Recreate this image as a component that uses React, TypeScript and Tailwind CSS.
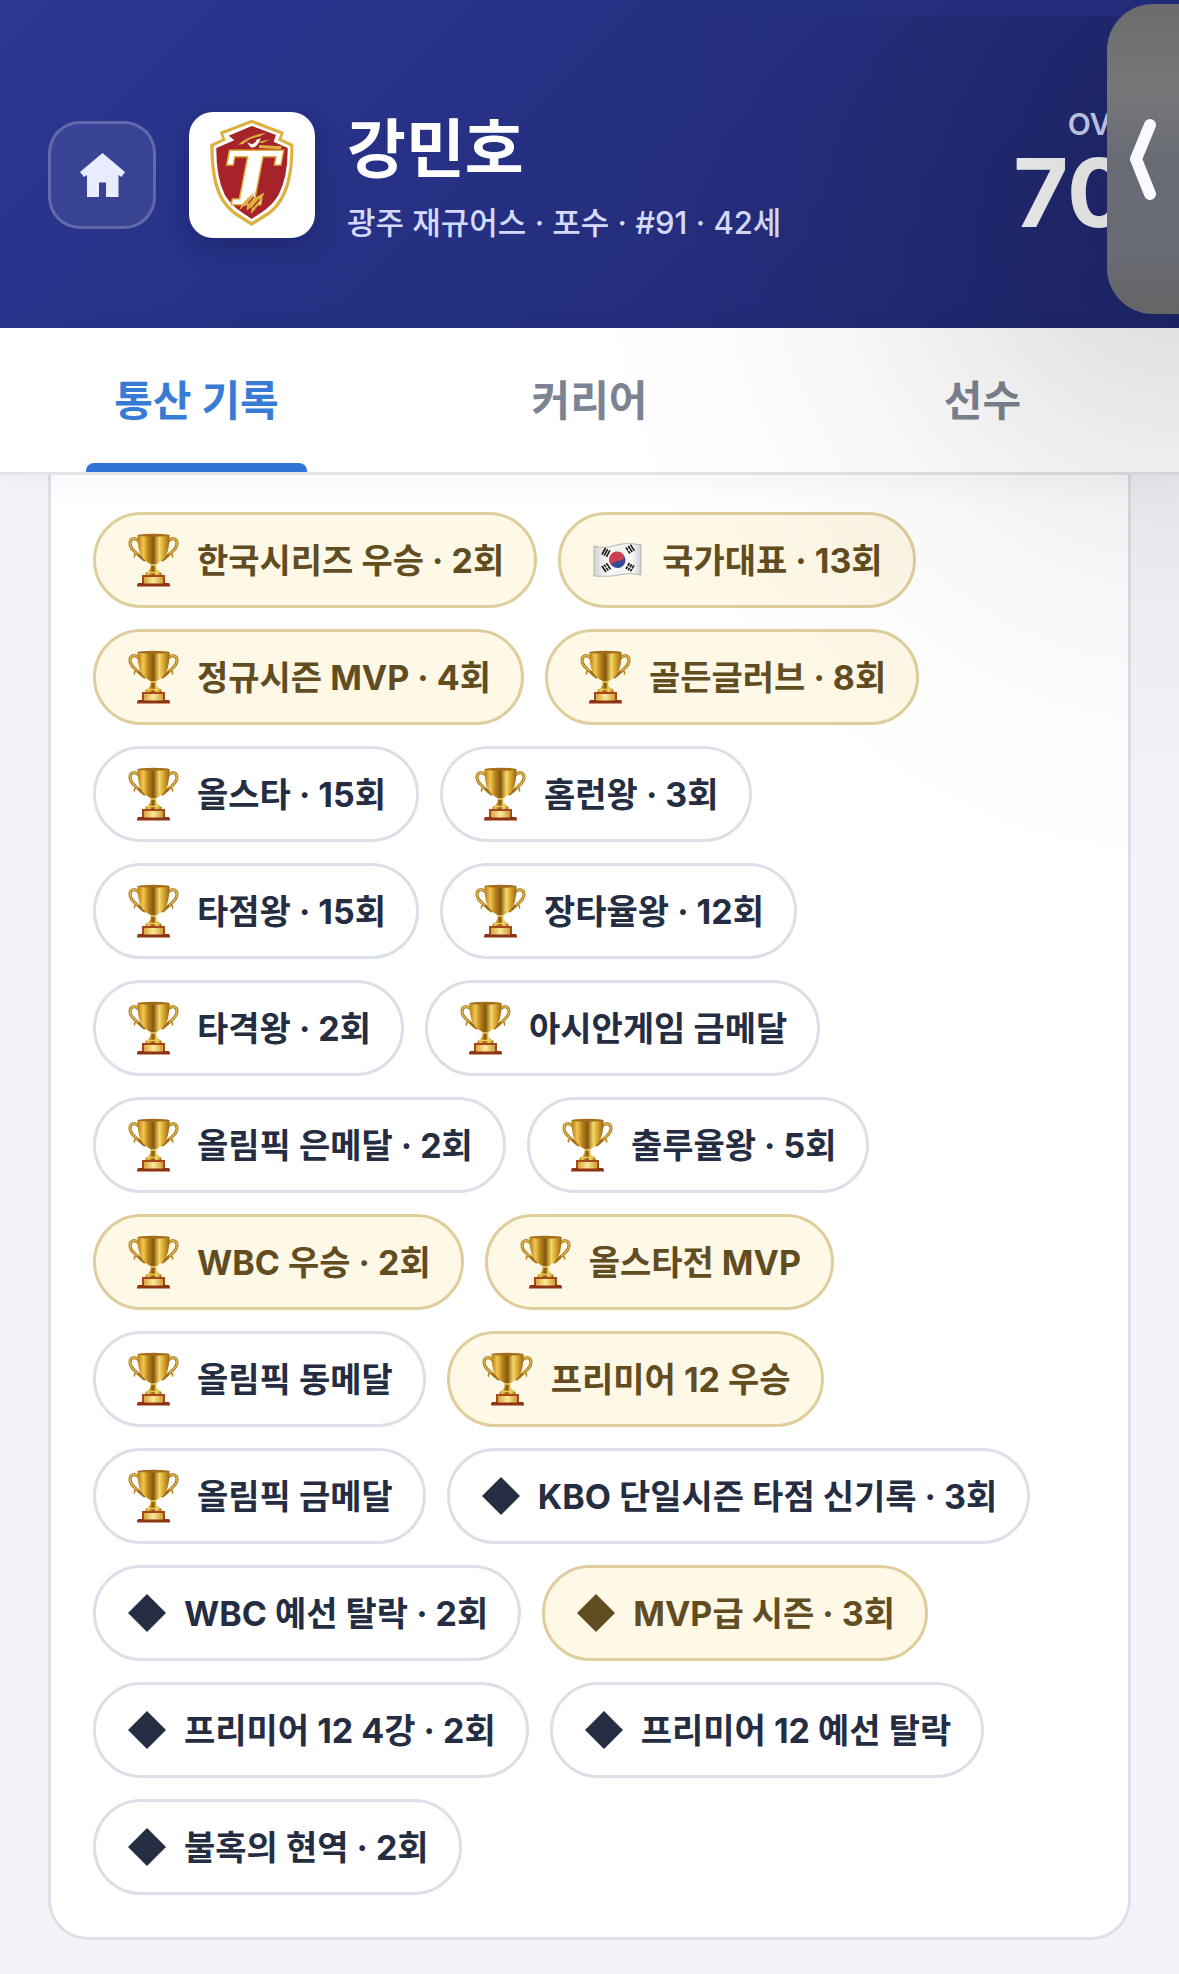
import clsx from 'clsx';
import React, { useState } from 'react';

type BadgeIcon = 'trophy' | 'flag' | 'diamond';

interface Badge {
  label: string;
  icon: BadgeIcon;
  gold?: boolean;
}

const TABS = ['통산 기록', '커리어', '선수'];

const BADGES: Badge[] = [
  { label: '한국시리즈 우승 · 2회', icon: 'trophy', gold: true },
  { label: '국가대표 · 13회', icon: 'flag', gold: true },
  { label: '정규시즌 MVP · 4회', icon: 'trophy', gold: true },
  { label: '골든글러브 · 8회', icon: 'trophy', gold: true },
  { label: '올스타 · 15회', icon: 'trophy' },
  { label: '홈런왕 · 3회', icon: 'trophy' },
  { label: '타점왕 · 15회', icon: 'trophy' },
  { label: '장타율왕 · 12회', icon: 'trophy' },
  { label: '타격왕 · 2회', icon: 'trophy' },
  { label: '아시안게임 금메달', icon: 'trophy' },
  { label: '올림픽 은메달 · 2회', icon: 'trophy' },
  { label: '출루율왕 · 5회', icon: 'trophy' },
  { label: 'WBC 우승 · 2회', icon: 'trophy', gold: true },
  { label: '올스타전 MVP', icon: 'trophy', gold: true },
  { label: '올림픽 동메달', icon: 'trophy' },
  { label: '프리미어 12 우승', icon: 'trophy', gold: true },
  { label: '올림픽 금메달', icon: 'trophy' },
  { label: 'KBO 단일시즌 타점 신기록 · 3회', icon: 'diamond' },
  { label: 'WBC 예선 탈락 · 2회', icon: 'diamond' },
  { label: 'MVP급 시즌 · 3회', icon: 'diamond', gold: true },
  { label: '프리미어 12 4강 · 2회', icon: 'diamond' },
  { label: '프리미어 12 예선 탈락', icon: 'diamond' },
  { label: '불혹의 현역 · 2회', icon: 'diamond' },
];

export default function App(): React.ReactElement {
  const [tab, setTab] = useState(0);

  return (
    <div className="relative min-h-screen overflow-hidden bg-[#f2f4f9] font-['Inter','Noto_Sans_CJK_KR',sans-serif]">
      <PlayerHeader />

      <div role="tablist" className="relative flex h-[147px] border-b-[3px] border-[#e1e4eb] bg-white shadow-[0_6px_36px_rgba(20,30,60,0.04)]">
        {TABS.map((name, i) => (
          <button
            key={name}
            type="button"
            role="tab"
            aria-selected={i === tab}
            onClick={() => setTab(i)}
            className={clsx(
              'relative flex-1 text-[42px]',
              i === tab ? 'font-bold text-[#377bd5]' : 'font-semibold text-[#7c8493]',
            )}
          >
            {name}
            {i === tab && (
              <span className="absolute inset-x-[22%] bottom-0 h-[9px] rounded-t-lg bg-[#3073d6]" />
            )}
          </button>
        ))}
      </div>

      <main className="px-12 pb-[34px]">
        <ul className="flex flex-wrap gap-[21px] rounded-b-[40px] border-[3px] border-t-0 border-[#dee0e8] bg-white px-[42px] pt-[37px] pb-[42px]">
          {BADGES.map((b) => <BadgePill key={b.label} badge={b} />)}
        </ul>
      </main>

      {/* shade cast by the edge handle */}
      <div className="pointer-events-none absolute top-4 right-0 h-[900px] w-[620px] bg-[radial-gradient(ellipse_600px_700px_at_100%_18%,rgba(0,0,0,0.16),rgba(0,0,0,0.12)_20%,rgba(0,0,0,0.07)_40%,rgba(0,0,0,0.03)_60%,rgba(0,0,0,0.01)_80%,transparent)]" />
      <EdgeHandle />
    </div>
  );
}

function PlayerHeader(): React.ReactElement {
  return (
    <header className="flex h-[328px] items-center bg-linear-135 from-[#2b3793] to-[#1f286f] px-12 pt-[22px]">
      <button
        type="button"
        aria-label="홈"
        className="flex size-[108px] items-center justify-center rounded-[32px] border-[3px] border-white/20 bg-white/8"
      >
        <svg viewBox="0 0 46 46" className="size-[46px] fill-[#e9ebff]" aria-hidden="true">
          <path d="M23.500 1 46 20 42.500 25 39.500 23V45H27V30.500H20V45H8V23L5 25 1 20Z" />
        </svg>
      </button>

      <div className="ml-[33px] size-[126px] overflow-hidden rounded-[24px] bg-white shadow-[0_8px_24px_rgba(10,15,60,0.3)]">
        <TeamLogo />
      </div>

      <div className="ml-8 min-w-0 flex-1 pt-[6px]">
        <h1 className="text-[64px] leading-[76px] font-bold text-white">강민호</h1>
        <p className="mt-[14px] text-[31px] leading-[44px] font-medium text-[#d5dafb]">
          광주 재규어스 · 포수 · #91 · 42세
        </p>
      </div>

      <div className="text-right">
        <div className="text-[30px] leading-9 font-semibold text-[#d5dafb]">OVR</div>
        <div className="text-[95px] leading-[102px] font-bold text-white">70</div>
      </div>
    </header>
  );
}

function BadgePill({ badge }: { badge: Badge }): React.ReactElement {
  return (
    <li
      className={clsx(
        'flex h-24 items-center gap-[18px] rounded-full border-[3px] pr-[30px] pl-8 text-[34px] font-bold whitespace-nowrap',
        badge.gold
          ? 'border-[#dfce9c] bg-[#fef8e7] text-[#614d1f]'
          : 'border-[#dbdfe7] bg-white text-[#252d42]',
      )}
    >
      {badge.icon === 'trophy' && <TrophyIcon />}
      {badge.icon === 'flag' && <FlagIcon />}
      {badge.icon === 'diamond' && <DiamondIcon />}
      <span>{badge.label}</span>
    </li>
  );
}

/** Handle of the side drawer, half hidden at the right edge of the screen. */
function EdgeHandle(): React.ReactElement {
  return (
    <button
      type="button"
      aria-label="패널 열기"
      className="absolute top-1 right-0 flex h-[310px] w-[72px] items-center justify-center rounded-l-[46px] bg-[linear-gradient(#6b6c6b,#767779_28%,#686b74_52%,#686b73_80%,#646566)]"
    >
      <svg viewBox="0 0 26 82" className="h-[82px] w-[26px]" fill="none" aria-hidden="true">
        <path d="M20 7 6 41 20 76" stroke="#f8faff" strokeWidth="12" strokeLinecap="round" strokeLinejoin="round" />
      </svg>
    </button>
  );
}

function DiamondIcon(): React.ReactElement {
  return (
    <svg viewBox="0 0 38 38" className="size-[38px] shrink-0 fill-current" aria-hidden="true">
      <path d="M19 0 38 19 19 38 0 19Z" />
    </svg>
  );
}

function TrophyIcon(): React.ReactElement {
  return (
    <svg viewBox="0 0 51 54" className="h-[54px] w-[51px] shrink-0" aria-hidden="true">
      <defs>
        <linearGradient id="cup" x1="0" x2="1">
          <stop offset="0" stopColor="#b57a12" />
          <stop offset=".18" stopColor="#f0c850" />
          <stop offset=".34" stopColor="#b8821a" />
          <stop offset=".5" stopColor="#85570f" />
          <stop offset=".68" stopColor="#f4d968" />
          <stop offset=".85" stopColor="#cf9a28" />
          <stop offset="1" stopColor="#99650f" />
        </linearGradient>
        <linearGradient id="plate" x1="0" x2="1">
          <stop offset="0" stopColor="#d9a441" />
          <stop offset=".5" stopColor="#fbe998" />
          <stop offset="1" stopColor="#d09a38" />
        </linearGradient>
      </defs>
      <g fill="none" strokeLinecap="round">
        <path d="M11 8.500C8 4 2 5 2 10.500c0 5 4 7.500 7.500 10.500 2 2 4 4 7 6M40 8.500c3-4.500 9-3.500 9 2 0 5-4 7.500-7.500 10.500-2 2-4 4-7 6" stroke="#a06c16" strokeWidth="3" />
        <path d="M11 8.500C8 4 2 5 2 10.500c0 5 4 7.500 7.500 10.500M40 8.500c3-4.500 9-3.500 9 2 0 5-4 7.500-7.500 10.500" stroke="#e5bf52" strokeWidth="1.300" />
        <path d="M8 21q-2 .5-1.500 3M43 21q2 .5 1.500 3" stroke="#b9831f" strokeWidth="1.500" />
      </g>
      <path d="M23 28h5l.5 7q1 3 5 5v3h-16v-3q4-2 5-5Z" fill="url(#cup)" />
      <path d="M9.500 2h32q0 13-3 19.500-3.500 6.500-10 9.500h-6q-6.500-3-10-9.500-3-6.500-3-19.500Z" fill="url(#cup)" />
      <ellipse cx="25.500" cy="2.200" rx="16" ry="1.500" fill="#a26c1c" />
      <path d="M22.500 32h6M19.500 39.500h12" stroke="#f0ca5a" strokeWidth="1.500" />
      <path d="M14 42h23v8.500H14Z" fill="#a5491d" />
      <path d="M10.500 50h30q1.500 0 1.500 3.500H9Q9 50 10.500 50Z" fill="#8f3412" />
      <path d="M16 44h19v6.500H16Z" fill="url(#plate)" />
    </svg>
  );
}

function FlagIcon(): React.ReactElement {
  return (
    <svg viewBox="0 0 51 36" className="h-9 w-[51px] shrink-0" aria-hidden="true">
      <defs>
        <linearGradient id="cloth" x1="0" x2="1">
          <stop offset="0" stopColor="#d3d3d5" />
          <stop offset=".28" stopColor="#fafafa" />
          <stop offset=".6" stopColor="#f1f1f2" />
          <stop offset=".78" stopColor="#ffffff" />
          <stop offset="1" stopColor="#cfcfd1" />
        </linearGradient>
      </defs>
      <path d="M1 4Q11 7 22 3.500T48 3V33Q38 30 28 32.500T1 34Z" fill="url(#cloth)" stroke="#b7b5b2" strokeWidth="1" />
      <g transform="rotate(-4 24.500 18)">
        <circle cx="24.500" cy="18" r="8" fill="#344a93" />
        <path d="M17.500 22A8 8 0 1 1 31.500 14.500Q31 18 28 18.500T23 19.500T17.500 22Z" fill="#ce3f4d" />
      </g>
      <g stroke="#1f1f22" strokeWidth="1.700" fill="none">
        <path d="M9 12.500 12.500 6M11.200 13.700 14.700 7.200M13.400 14.900 16.900 8.400" />
        <path d="M33 5.500 37 11.500M35.200 4 39.200 10M37.400 2.600 41.400 8.600" />
        <path d="M9 24 13 30M11.200 22.600 15.200 28.600M13.400 21.200 17.400 27.200" />
        <path d="M33 27 36.500 21M35.200 28.200 38.700 22.200M37.400 29.400 40.900 23.400" />
      </g>
      <g stroke="#f2f2f2" strokeWidth="1" fill="none">
        <path d="M33.500 23.700 39.500 27M34.500 9.200 37 7.500M12 26.200l3-2" />
      </g>
    </svg>
  );
}

/** Shield crest with the jaguar brow over the initial. */
function TeamLogo(): React.ReactElement {
  return (
    <svg viewBox="27 36 378 378" className="size-full" role="img" aria-label="광주 재규어스">
      <path
        d="M215 59 312 96 305 116 340 133Q342 236 312 292 298 322 268 345L215 378 163 345Q133 322 118 292 90 236 91 133L127 116 119 96Z"
        fill="#deb03f"
      />
      <path
        d="M215 69 301 102 294 121 331 139Q332 233 303 288 290 315 262 337L215 366 169 337Q141 315 127 288 100 233 101 139L137 121 130 102Z"
        fill="#fff"
      />
      <path
        d="M215 78 288 105 281 125 323 144Q324 230 296 284 282 308 256 329L215 357 174 329Q149 308 134 284 108 230 109 144L163 121 146 107Z"
        fill="#a52329"
      />
      <path d="M174 134Q208 104 258 99L240 109Q205 116 190 132ZM232 126 270 118 248 129ZM238 135 306 139 302 148 236 144Z" fill="#deb03f" />
      <path d="M201 127 216 133Q226 130 230 119L243 115 234 132Q226 144 212 142Z" fill="#fff" />
      <text
        x="214"
        y="311"
        textAnchor="middle"
        fontFamily="'DejaVu Serif', serif"
        fontSize="218"
        fontWeight="700"
        fontStyle="italic"
        fill="#fff"
        stroke="#deb03f"
        strokeWidth="9"
        paintOrder="stroke"
      >
        T
      </text>
      <path d="M176 334Q187 301 227 276L209 302 254 277Q238 319 212 342L216 320 199 332 202 313Q188 319 176 334Z" fill="#deb03f" />
      <path d="M205 310 222 290M218 322 238 298" stroke="#a52329" strokeWidth="4" />
    </svg>
  );
}
